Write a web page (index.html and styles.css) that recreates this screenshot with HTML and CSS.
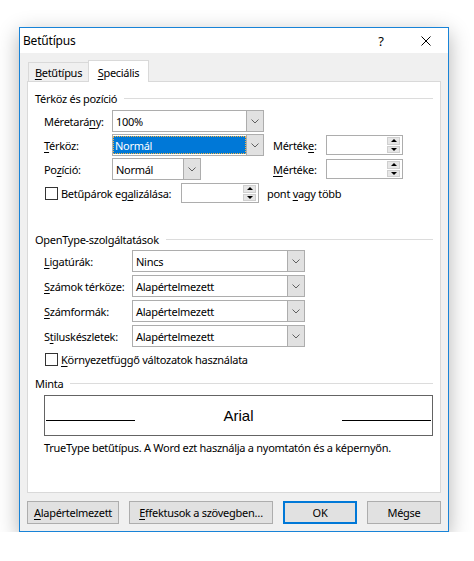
FILE: index.html
```html
<!DOCTYPE html>
<html lang="hu">
<head>
<meta charset="utf-8">
<title>Betűtípus</title>
<link rel="stylesheet" href="styles.css">
</head>
<body>
<div class="window">
  <div class="titlebar">
    <span class="title">Betűtípus</span>
    <span class="help">?</span>
    <span class="close">
      <svg width="10" height="10" viewBox="0 0 10 10"><path d="M0.5 0.5L9.5 9.5M9.5 0.5L0.5 9.5" stroke="#000" stroke-width="1"/></svg>
    </span>
  </div>
  <div class="body">
    <div class="tabs">
      <div class="tab"><u>B</u>etűtípus</div>
      <div class="tab active"><u>S</u>peciális</div>
    </div>
    <div class="panel">
      <div class="group-head"><span>Térköz és pozíció</span><i class="rule"></i></div>
      <div class="spacing-grid">
        <span class="lbl">Méretará<u>n</u>y:</span>
        <div class="combo wide">
          <span class="value">100%</span>
          <span class="drop"><svg width="8" height="5" viewBox="0 0 8 5"><path d="M0.5 0.5L4 4L7.5 0.5" fill="none" stroke="#606060"/></svg></span>
        </div>
        <span></span><span></span>

        <span class="lbl"><u>T</u>érköz:</span>
        <div class="combo wide focused">
          <span class="value"><span class="sel">Normál</span></span>
          <span class="drop"><svg width="8" height="5" viewBox="0 0 8 5"><path d="M0.5 0.5L4 4L7.5 0.5" fill="none" stroke="#606060"/></svg></span>
        </div>
        <span class="lbl side">Mérték<u>e</u>:</span>
        <div class="spin">
          <span class="field"></span>
          <span class="arrows"><span class="sb"><i class="up"></i></span><span class="sb"><i class="down"></i></span></span>
        </div>

        <span class="lbl">Po<u>z</u>íció:</span>
        <div class="combo short">
          <span class="value">Normál</span>
          <span class="drop"><svg width="8" height="5" viewBox="0 0 8 5"><path d="M0.5 0.5L4 4L7.5 0.5" fill="none" stroke="#606060"/></svg></span>
        </div>
        <span class="lbl side"><u>M</u>értéke:</span>
        <div class="spin">
          <span class="field"></span>
          <span class="arrows"><span class="sb"><i class="up"></i></span><span class="sb"><i class="down"></i></span></span>
        </div>

        <div class="kern-row">
          <span class="check-label"><span class="checkbox"></span>Betűpárok eg<u>a</u>lizálása:</span>
          <div class="spin kern">
            <span class="field"></span>
            <span class="arrows"><span class="sb"><i class="up"></i></span><span class="sb"><i class="down"></i></span></span>
          </div>
          <span class="after">pont <u>v</u>agy több</span>
        </div>
      </div>

      <div class="group-head second"><span>OpenType-szolgáltatások</span><i class="rule"></i></div>
      <div class="ot-grid">
        <span class="lbl"><u>L</u>igatúrák:</span>
        <div class="combo ot"><span class="value">Nincs</span><span class="drop"><svg width="8" height="5" viewBox="0 0 8 5"><path d="M0.5 0.5L4 4L7.5 0.5" fill="none" stroke="#606060"/></svg></span></div>
        <span class="lbl"><u>S</u>zámok térköze:</span>
        <div class="combo ot"><span class="value">Alapértelmezett</span><span class="drop"><svg width="8" height="5" viewBox="0 0 8 5"><path d="M0.5 0.5L4 4L7.5 0.5" fill="none" stroke="#606060"/></svg></span></div>
        <span class="lbl"><u>S</u>zámformák:</span>
        <div class="combo ot"><span class="value">Alapértelmezett</span><span class="drop"><svg width="8" height="5" viewBox="0 0 8 5"><path d="M0.5 0.5L4 4L7.5 0.5" fill="none" stroke="#606060"/></svg></span></div>
        <span class="lbl">S<u>t</u>iluskészletek:</span>
        <div class="combo ot"><span class="value">Alapértelmezett</span><span class="drop"><svg width="8" height="5" viewBox="0 0 8 5"><path d="M0.5 0.5L4 4L7.5 0.5" fill="none" stroke="#606060"/></svg></span></div>
      </div>
      <div class="ctx-row"><span class="check-label"><span class="checkbox"></span><u>K</u>örnyezetfüggő változatok használata</span></div>

      <div class="group-head third"><span>Minta</span><i class="rule"></i></div>
      <div class="preview">
        <i class="pline"></i>
        <span class="sample">Arial</span>
        <i class="pline"></i>
      </div>
      <p class="caption">TrueType betűtípus. A Word ezt használja a nyomtatón és a képernyőn.</p>
    </div>
    <div class="buttons">
      <button class="btn b-default"><u>A</u>lapértelmezett</button>
      <button class="btn b-effects"><u>E</u>ffektusok a szövegben…</button>
      <button class="btn b-ok">OK</button>
      <button class="btn b-cancel">Mégse</button>
    </div>
  </div>
</div>
</body>
</html>
```
FILE: styles.css
```css
html, body {
  margin: 0;
  background: #fff;
}

body {
  font-family: "Noto Sans", "Open Sans", sans-serif;
  font-size: 11px;
  letter-spacing: -0.28px;
  color: #000;
}

u {
  text-decoration-thickness: 1px;
  text-underline-offset: 2px;
}

.window {
  box-sizing: border-box;
  width: 430px;
  height: 505px;
  margin: 27px 0 0 19px;
  border: 1px solid #1883d7;
  background: #f0f0f0;
  box-shadow: 0 6px 20px rgba(0, 0, 0, 0.3);
  display: flex;
  flex-direction: column;
}

/* title bar */
.titlebar {
  height: 25px;
  flex: none;
  background: #fff;
  display: flex;
  align-items: center;
  padding-left: 3px;
}

.title {
  flex: 1;
  font-size: 12px;
  letter-spacing: -0.2px;
}

.help {
  width: 10px;
  text-align: center;
  font-size: 13px;
  margin-right: 35px;
}

.close {
  display: flex;
  margin-right: 17px;
}

/* dialog body */
.body {
  flex: 1;
  display: flex;
  flex-direction: column;
  padding: 0 7px 7px;
}

.tabs {
  margin-top: 7px;
  height: 21px;
  display: flex;
  align-items: flex-end;
  padding-left: 1px;
}

.tab {
  box-sizing: border-box;
  width: 60px;
  height: 19px;
  border: 1px solid #d9d9d9;
  border-right: none;
  border-bottom: none;
  background: #f0f0f0;
  text-align: center;
  line-height: 17px;
  padding-top: 1px;
}

.tab.active {
  width: 61px;
  height: 22px;
  border-right: 1px solid #d9d9d9;
  background: #fff;
  padding-top: 3px;
  margin-bottom: -1px;
  position: relative;
  z-index: 1;
}

.panel {
  box-sizing: border-box;
  height: 412px;
  border: 1px solid #d9d9d9;
  background: #fff;
  padding: 8px 7px 0;
}

.group-head {
  height: 16px;
  display: flex;
  align-items: center;
  gap: 7px;
}

.group-head .rule {
  flex: 1;
  height: 1px;
  background: #dcdcdc;
}

.group-head.second { margin-top: 27px; }
.group-head.third { margin-top: 8px; }

.lbl {
  white-space: nowrap;
}

.lbl.side {
  padding-left: 9px;
}

/* spacing & position rows */
.spacing-grid {
  margin-top: 4px;
  padding-left: 9px;
  display: grid;
  grid-template-columns: 68px 152px 62px 77px;
  grid-auto-rows: 22px;
  row-gap: 2px;
  align-items: center;
}

.kern-row {
  grid-column: 1 / -1;
  display: flex;
  align-items: center;
}

.kern-row .check-label {
  width: 137px;
}

.after {
  margin-left: 8px;
}

.check-label {
  display: flex;
  align-items: center;
  white-space: nowrap;
}

.checkbox {
  box-sizing: border-box;
  width: 13px;
  height: 13px;
  border: 1px solid #333;
  background: #fff;
  margin: 0 3px 0 1px;
  flex: none;
}

/* combo boxes */
.combo {
  box-sizing: border-box;
  height: 22px;
  border: 1px solid #adadad;
  background: #fff;
  display: flex;
}

.combo.wide { width: 152px; }
.combo.short { width: 89px; }
.combo.ot { width: 173px; }

.combo .value {
  flex: 1;
  display: flex;
  align-items: center;
  padding-left: 3px;
}

.combo.focused .value {
  padding: 1px 0 1px 0;
  align-items: stretch;
}

.combo .sel {
  flex: 1;
  background: #0078d7;
  color: #fff;
  display: flex;
  align-items: center;
  padding-left: 2px;
  outline: 1px dotted #f5b342;
  outline-offset: -1px;
}

.combo .drop {
  width: 16px;
  border-left: 1px solid #adadad;
  background: #e1e1e1;
  display: flex;
  align-items: center;
  justify-content: center;
}

/* spin boxes */
.spin {
  box-sizing: border-box;
  width: 77px;
  height: 20px;
  border: 1px solid #adadad;
  background: #fff;
  display: flex;
  padding: 1px 2px 1px 0;
}

.spin.kern { width: 78px; }

.spin .field { flex: 1; }

.spin .arrows {
  width: 13px;
  display: flex;
  flex-direction: column;
  gap: 1px;
}

.spin .sb {
  flex: 1;
  background: #e6e6e6;
  border: 1px solid #cfcfcf;
  display: flex;
  align-items: center;
  justify-content: center;
}

.spin .up {
  width: 0;
  height: 0;
  border-left: 3px solid transparent;
  border-right: 3px solid transparent;
  border-bottom: 3px solid #000;
}

.spin .down {
  width: 0;
  height: 0;
  border-left: 3px solid transparent;
  border-right: 3px solid transparent;
  border-top: 3px solid #000;
}

/* OpenType rows */
.ot-grid {
  margin-top: 3px;
  padding-left: 9px;
  display: grid;
  grid-template-columns: 88px 173px;
  grid-auto-rows: 22px;
  row-gap: 3px;
  align-items: center;
}

.ctx-row {
  margin-top: 4px;
  padding-left: 9px;
  height: 16px;
  display: flex;
  align-items: center;
}

/* sample */
.preview {
  box-sizing: border-box;
  margin: 4px 0 0 9px;
  height: 41px;
  border: 1px solid #646464;
  padding: 0 1px;
  display: flex;
  align-items: flex-start;
}

.pline {
  width: 89px;
  height: 1px;
  background: #000;
  margin-top: 24px;
}

.sample {
  flex: 1;
  text-align: center;
  font-family: "Liberation Sans", Arial, sans-serif;
  font-size: 15px;
  letter-spacing: 0;
  line-height: 18px;
  margin-top: 11px;
}

.caption {
  margin: 4px 0 0 9px;
  line-height: 16px;
}

/* button row */
.buttons {
  margin-top: 8px;
  display: flex;
  gap: 10px;
}

.btn {
  box-sizing: border-box;
  height: 23px;
  border: 1px solid #adadad;
  background: #e1e1e1;
  font: inherit;
  letter-spacing: inherit;
  color: #000;
  padding: 0;
}

.b-default { width: 92px; }
.b-effects { width: 144px; }
.b-ok { width: 74px; border: 2px solid #0078d7; }
.b-cancel { width: 74px; }
```
